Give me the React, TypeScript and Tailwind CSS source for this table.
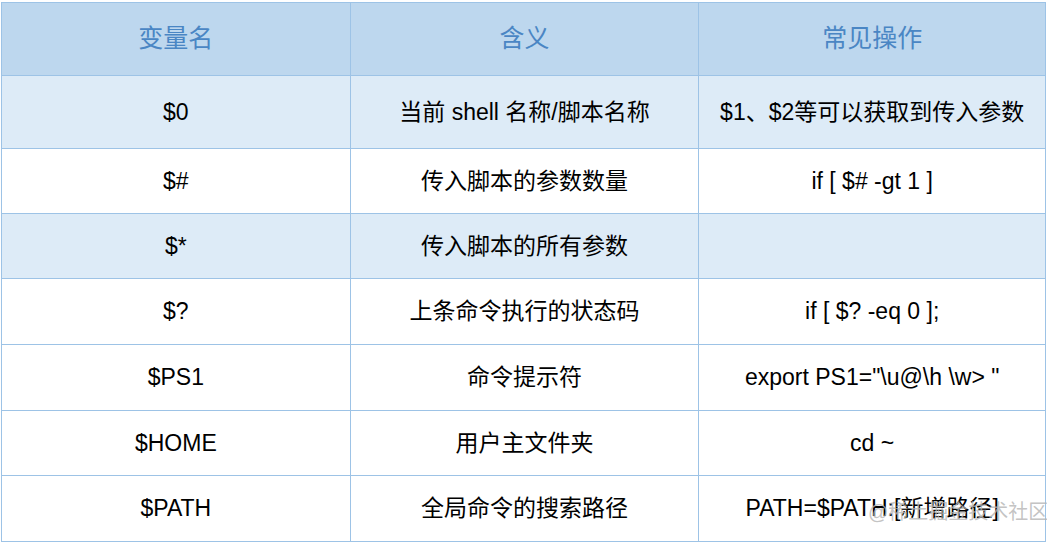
const rows = [
  { h: "h-[73px]", bg: "bg-[#ddebf7]", cells: ["$0", "当前 shell 名称/脚本名称", "$1、$2等可以获取到传入参数"] },
  { h: "h-[65px]", bg: "bg-white", cells: ["$#", "传入脚本的参数数量", "if [ $# -gt 1 ]"] },
  { h: "h-[65px]", bg: "bg-[#ddebf7]", cells: ["$*", "传入脚本的所有参数", ""] },
  { h: "h-[66px]", bg: "bg-white", cells: ["$?", "上条命令执行的状态码", "if [ $? -eq 0 ];"] },
  { h: "h-[66px]", bg: "bg-white", cells: ["$PS1", "命令提示符", 'export PS1="\\u@\\h \\w> "'] },
  { h: "h-[65px]", bg: "bg-white", cells: ["$HOME", "用户主文件夹", "cd ~"] },
  { h: "h-[66px]", bg: "bg-white", cells: ["$PATH", "全局命令的搜索路径", "PATH=$PATH:[新增路径]"] },
];

const widths = ["w-[349px]", "w-[349px]", "w-[347px]"];

export default function App() {
  return (
    <div className="relative w-[1047px] h-[547px] bg-white pt-[2px] pl-[1px] font-['Liberation_Sans','Noto_Sans_CJK_SC',sans-serif]">
      <div className="w-[1045px] border-t border-l border-[#9dc3e6]">
        {/* header */}
        <div className="flex h-[73px] bg-[#bdd7ee]">
          {["变量名", "含义", "常见操作"].map((t, i) => (
            <div
              key={t}
              className={`${widths[i]} flex items-center justify-center border-r border-b border-[#9dc3e6] text-[25px] text-[#4a86c4]`}
            >
              {t}
            </div>
          ))}
        </div>
        {rows.map((r, ri) => (
          <div key={ri} className={`flex ${r.h} ${r.bg}`}>
            {r.cells.map((c, i) => (
              <div
                key={i}
                className={`${widths[i]} flex items-center justify-center border-r border-b border-[#9dc3e6] text-[23px] text-black whitespace-pre`}
              >
                {c}
              </div>
            ))}
          </div>
        ))}
      </div>
      {/* watermark */}
      <div className="absolute left-[868px] top-[497px] whitespace-nowrap text-[20px] text-[#b4b4b4]/80">
        @稀土掘金技术社区
      </div>
    </div>
  );
}
